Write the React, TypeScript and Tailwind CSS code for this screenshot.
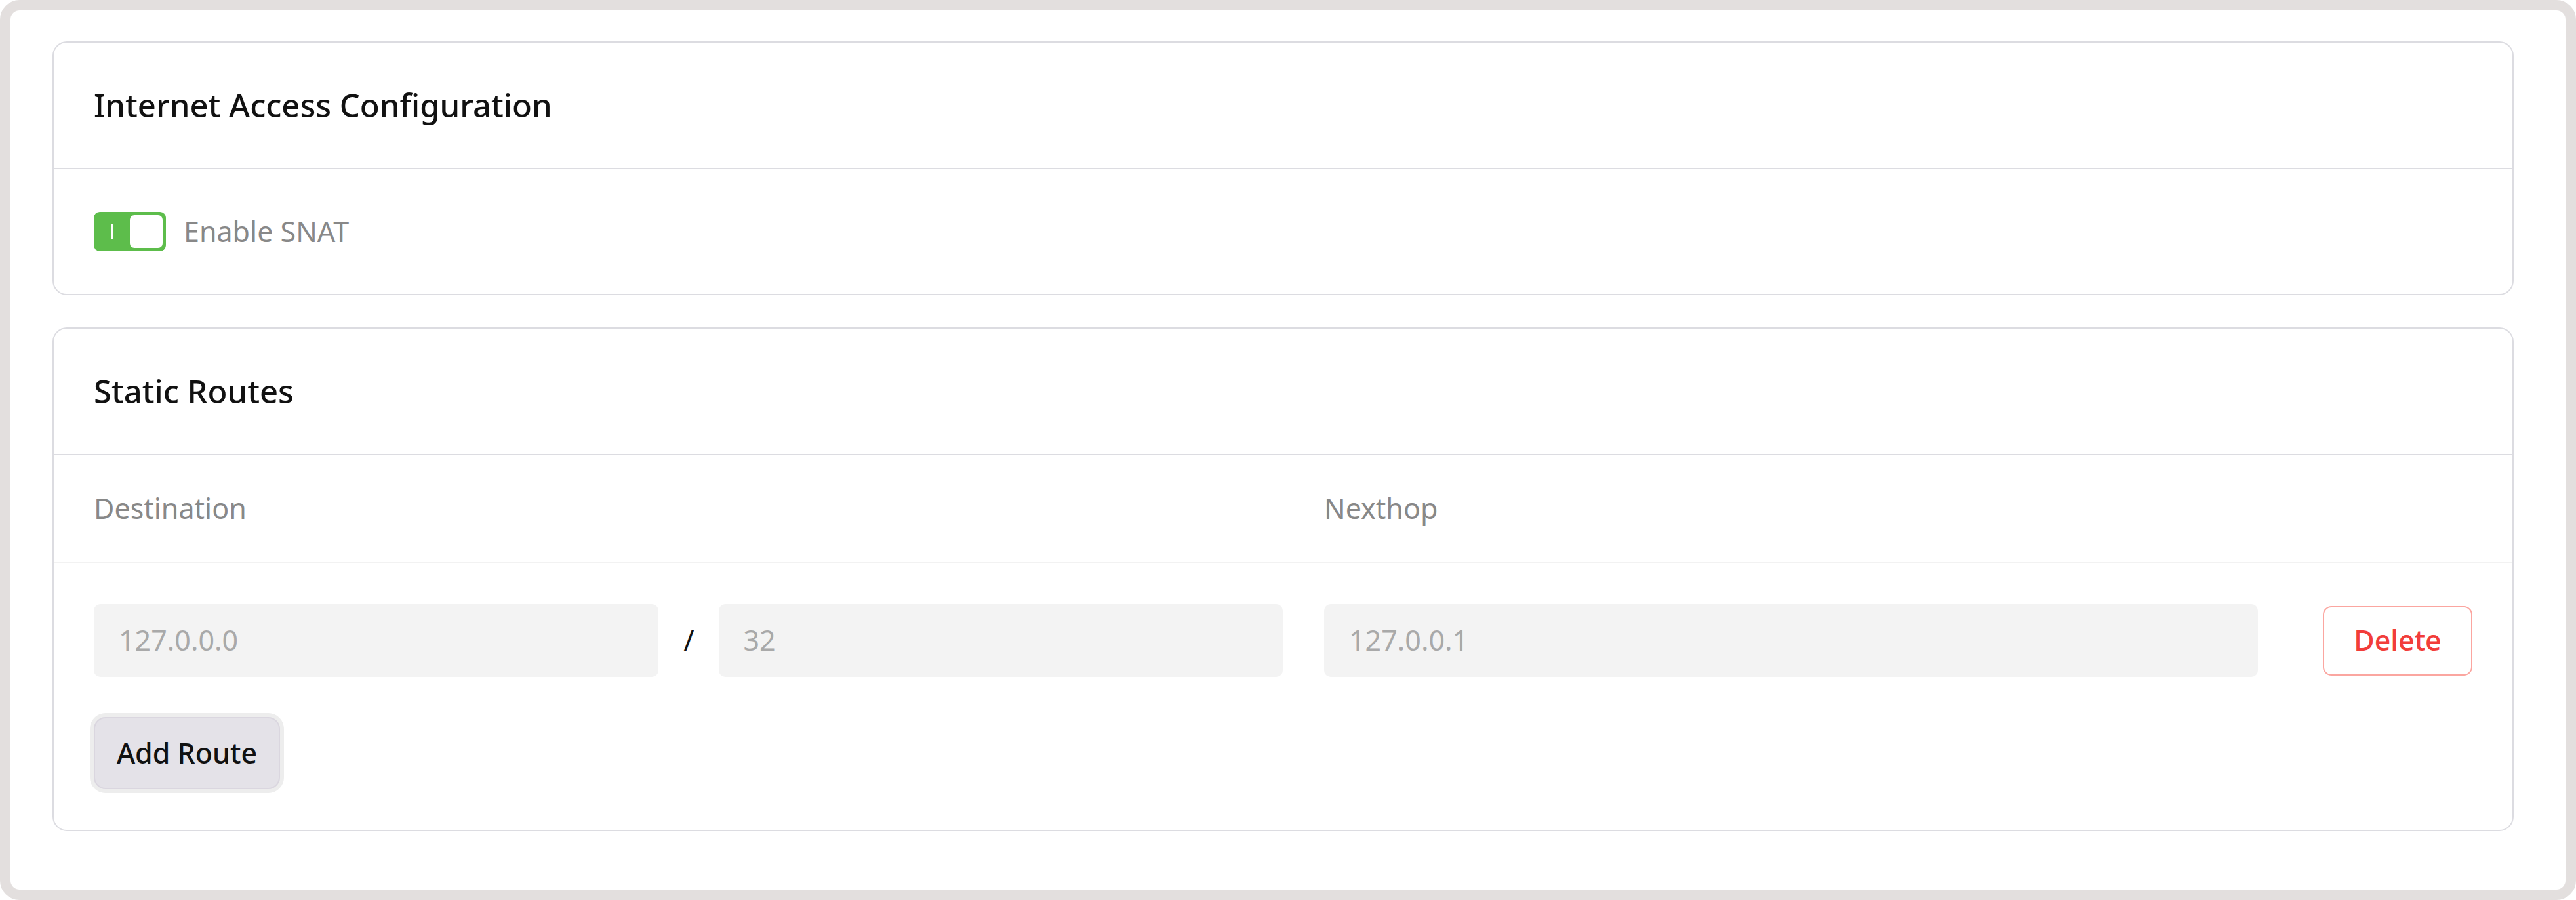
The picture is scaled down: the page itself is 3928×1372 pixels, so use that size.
import React from "react";

function Toggle() {
  return (
    <div className="relative w-[110px] h-[60px] rounded-[9px] bg-[#5dbd4b] flex items-center justify-end pr-[5px]">
      <div className="absolute left-[26px] top-[19px] w-[4px] h-[23px] bg-white rounded-[1px]" />
      <div className="w-[50px] h-[50px] rounded-[7px] bg-white" />
    </div>
  );
}

function Field({ value, className }: { value: string; className?: string }) {
  return (
    <div
      className={
        "h-[111px] rounded-[10px] bg-[#f3f3f3] flex items-center pl-[38px] text-[43px] text-[#a9a9a9] " +
        (className ?? "")
      }
    >
      {value}
    </div>
  );
}

export default function App() {
  return (
    <div className="w-[3928px] h-[1372px] bg-white font-['Noto_Sans',sans-serif] text-[#111]">
      <div className="h-full border-[16px] border-[#e3dfde] rounded-[30px] pt-[47px] pl-[64px] pr-[79px] flex flex-col gap-[49px]">
        {/* Card 1 */}
        <div className="border-2 border-[#dcdce1] rounded-[22px] bg-white">
          <div className="h-[193px] border-b-2 border-[#dcdce1] flex items-center px-[61px] text-[49px] font-medium text-[#111]">
            Internet Access Configuration
          </div>
          <div className="h-[190px] flex items-center px-[61px] gap-[27px]">
            <Toggle />
            <span className="text-[43px] text-[#888888]">Enable SNAT</span>
          </div>
        </div>

        {/* Card 2 */}
        <div className="border-2 border-[#dcdce1] rounded-[22px] bg-white">
          <div className="h-[193px] border-b-2 border-[#dcdce1] flex items-center px-[61px] text-[49px] font-medium text-[#111]">
            Static Routes
          </div>
          <div className="h-[165px] border-b-2 border-[#f2f2f2] flex items-center px-[61px] text-[43px] text-[#888888]">
            <div className="w-[1813px]">Destination</div>
            <div className="ml-[63px] w-[1424px]">Nexthop</div>
          </div>
          <div className="px-[61px] pt-[62px] pb-[62px] flex flex-col gap-[61px]">
            <div className="flex items-center">
              <div className="w-[1813px] grid grid-cols-[1fr_auto_1fr] items-center gap-x-[39px]">
                <Field value="127.0.0.0" />
                <span className="text-[43px] text-[#111] w-[14px] text-center">/</span>
                <Field value="32" />
              </div>
              <Field value="127.0.0.1" className="ml-[63px] w-[1424px]" />
              <button className="ml-auto w-[228px] h-[106px] rounded-[13px] border-2 border-[#fba6a0] bg-white text-[43px] font-medium text-[#f23d3a] flex items-center justify-center">
                Delete
              </button>
            </div>
            <div className="flex">
              <button className="h-[110px] w-[284px] justify-center rounded-[18px] border-2 border-[#dad6df] bg-[#e4e2e8] text-[43px] font-medium text-[#111] ring-[6px] ring-[#ededed] flex items-center">
                Add Route
              </button>
            </div>
          </div>
        </div>
      </div>
    </div>
  );
}
